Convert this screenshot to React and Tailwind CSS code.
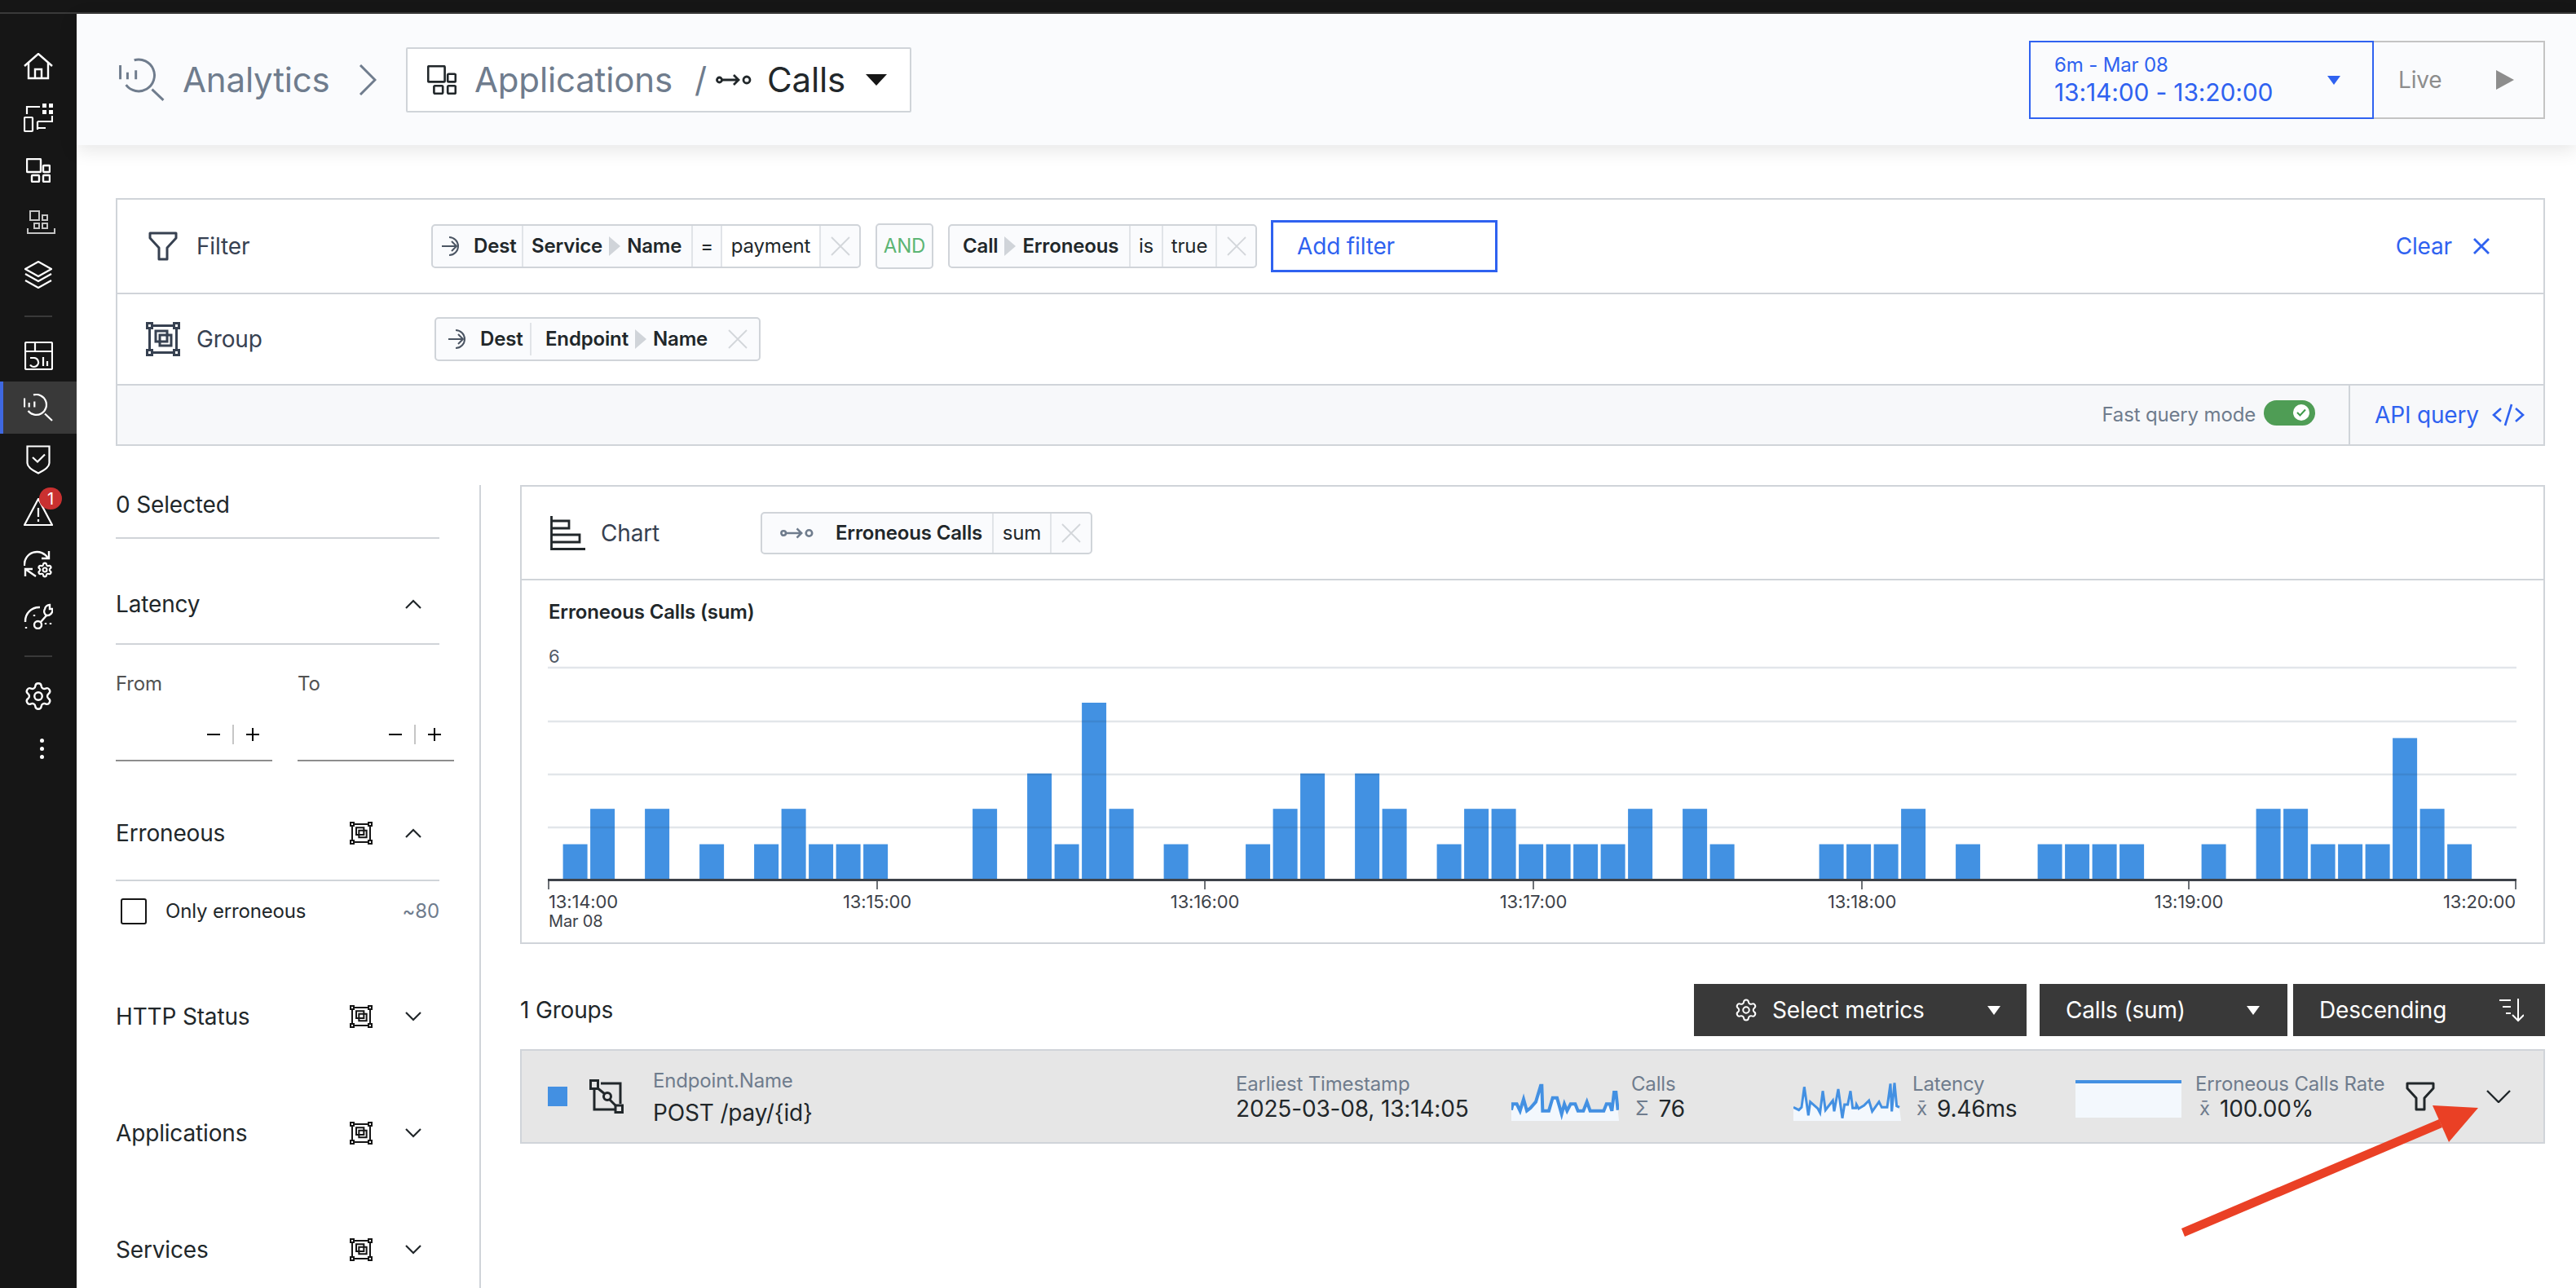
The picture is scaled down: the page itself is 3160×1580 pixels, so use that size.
import { Settings } from 'lucide-react'

const BARS = { 0: 1, 1: 2, 3: 2, 5: 1, 7: 1, 8: 2, 9: 1, 10: 1, 11: 1, 15: 2, 17: 3, 18: 1, 19: 5, 20: 2, 22: 1, 25: 1, 26: 2, 27: 3, 29: 3, 30: 2, 32: 1, 33: 2, 34: 2, 35: 1, 36: 1, 37: 1, 38: 1, 39: 2, 41: 2, 42: 1, 46: 1, 47: 1, 48: 1, 49: 2, 51: 1, 54: 1, 55: 1, 56: 1, 57: 1, 60: 1, 62: 2, 63: 2, 64: 1, 65: 1, 66: 1, 67: 4, 68: 2, 69: 1 }
const TICKS = [
  [673, '13:14:00', 'start'],
  [1076, '13:15:00', 'middle'],
  [1478, '13:16:00', 'middle'],
  [1881, '13:17:00', 'middle'],
  [2284, '13:18:00', 'middle'],
  [2685, '13:19:00', 'middle'],
  [3086, '13:20:00', 'end'],
]
const CALLS_LINE = '40,125 45,103 60,103 72,128 85,85 97,128 110,118 130,95 148,35 152,35 155,128 160,128 178,128 192,80 208,80 225,140 235,103 245,128 258,103 275,103 285,128 305,128 318,95 330,128 380,128 390,103 402,103 410,128 418,60 425,60 432,125'
const LATENCY_LINE = '40,115 60,125 70,115 80,40 95,145 102,95 130,120 138,135 148,55 158,125 185,90 190,130 205,48 220,155 228,105 240,105 250,55 258,118 270,118 272,105 280,120 300,108 318,90 330,130 355,95 365,115 385,115 397,28 402,130 412,25 420,110 430,115'

function Stroke({ w, h, vw, vh, sw = 2, className = '', children }) {
  return (
    <svg width={w} height={h} viewBox={`0 0 ${vw ?? w} ${vh ?? h}`} fill="none" stroke="currentColor" strokeWidth={sw} className={`shrink-0 ${className}`}>
      {children}
    </svg>
  )
}

function AnalyticsIcon({ w = 36, h = 34, sw = 2.2, className }) {
  return (
    <Stroke w={w} h={h} vw={36} vh={34} sw={sw} className={className}>
      <path d="M12 1.4A12.5 12.5 0 1 1 5.5 21" />
      <path d="M26 24.5L35 33" />
      <path d="M1 5.5V16.5M6.7 11V16.5M13.3 9.5V16.5" />
    </Stroke>
  )
}

function AppsIcon({ w = 30, h = 30, sw = 2.4, className }) {
  return (
    <Stroke w={w} h={h} vw={30} vh={30} sw={sw} className={className}>
      <rect x="1" y="1" width="17" height="16" rx="1" />
      <rect x="21" y="9" width="8" height="8" rx="1" />
      <rect x="7" y="21" width="9" height="8" rx="1" />
      <rect x="21" y="21" width="8" height="8" rx="1" />
    </Stroke>
  )
}

function GroupIcon({ size = 42, className }) {
  return (
    <Stroke w={size} h={size} vw={42} vh={42} sw={3} className={className}>
      <rect x="1.5" y="1.5" width="6" height="6" />
      <rect x="34.5" y="1.5" width="6" height="6" />
      <rect x="1.5" y="34.5" width="6" height="6" />
      <rect x="34.5" y="34.5" width="6" height="6" />
      <path d="M7 4.5H35M7 37.5H35M4.5 7V35M37.5 7V35" />
      <path d="M12 11H26V16H31V29H17V24H12Z" />
      <path d="M17 16H26V24H17Z" />
    </Stroke>
  )
}

function FilterIcon({ className }) {
  return (
    <Stroke w={36} h={36} sw={3} className={className}>
      <path d="M2 2H34V8L23 20V34H13V20L2 8Z" strokeLinejoin="round" />
    </Stroke>
  )
}

function CallsIcon({ w = 45, className }) {
  return (
    <Stroke w={w} h={16} vw={45} vh={16} sw={2.8} className={className}>
      <circle cx="4.5" cy="8" r="3" />
      <path d="M8 8H28M22 2L28 8L22 14" />
      <circle cx="38" cy="8" r="4" />
    </Stroke>
  )
}

function DestIcon() {
  return (
    <Stroke w={28} h={26} sw={2} className="text-[#4b5563]">
      <path d="M1 13H19M13 7L19 13L13 19" />
      <path d="M10 2A11 11 0 1 1 10 24" />
    </Stroke>
  )
}

function Pointer() {
  return (
    <svg width="14" height="24" viewBox="0 0 14 24" className="mx-[8px] shrink-0">
      <polygon points="0,0 14,12 0,24" fill="#d0d4d9" />
    </svg>
  )
}

function ChipClose({ size = 26 }) {
  return (
    <Stroke w={size} h={size} vw={26} vh={26} sw={1.8} className="text-[#d3d6da]">
      <path d="M2 2L24 24M24 2L2 24" />
    </Stroke>
  )
}

function Chevron({ up }) {
  return (
    <Stroke w={20} h={12} sw={2.2} className="text-[#21272a]">
      <path d={up ? 'M1 11L10 2L19 11' : 'M1 1L10 10L19 1'} />
    </Stroke>
  )
}

function Caret({ w = 16, h = 11, className }) {
  return (
    <svg width={w} height={h} viewBox="0 0 16 11" preserveAspectRatio="none" className={`shrink-0 ${className}`}>
      <polygon points="0,0 16,0 8,11" fill="currentColor" />
    </svg>
  )
}

function NavItem({ active, children, top = '' }) {
  return (
    <div className={`relative flex h-[64px] items-center justify-center ${top} ${active ? 'border-l-[4px] border-[#3f68e0] bg-[#393939] pr-[4px]' : ''}`}>
      {children}
    </div>
  )
}

function Sidebar() {
  return (
    <nav className="flex w-[94px] shrink-0 flex-col bg-[#161616] pt-[32px] text-white">
      <NavItem>
        <Stroke w={36} h={33} sw={2.4}>
          <path d="M1 16L18 1L35 16" />
          <path d="M6 12V31H30V12" />
          <path d="M14 31V20H22V31" />
        </Stroke>
      </NavItem>
      <NavItem>
        <Stroke w={36} h={36} sw={2.2}>
          <rect x="1" y="17" width="10" height="17" rx="1" />
          <path d="M4 13V4H20" />
          <path d="M35 15V22H17M17 22V32M17 30H27" />
          <g fill="white" stroke="none">
            <rect x="23" y="0" width="5" height="5" />
            <rect x="31" y="0" width="5" height="5" />
            <rect x="23" y="8" width="5" height="5" />
            <rect x="31" y="8" width="5" height="5" />
          </g>
        </Stroke>
      </NavItem>
      <NavItem>
        <AppsIcon />
      </NavItem>
      <NavItem>
        <Stroke w={35} h={30} sw={2} className="ml-[6px] text-[#c4c4c4]">
          <rect x="4" y="1" width="11" height="11" />
          <rect x="19" y="6" width="6" height="6" />
          <rect x="9" y="16" width="6" height="6" />
          <rect x="19" y="16" width="6" height="6" />
          <path d="M1 22V28H34V22" />
        </Stroke>
      </NavItem>
      <NavItem>
        <Stroke w={34} h={34} sw={2.2}>
          <path d="M17 1L33 10L17 19L1 10Z" />
          <path d="M1 16L17 25L33 16M1 24L17 33L33 24" />
        </Stroke>
      </NavItem>
      <div className="mx-[30px] mt-[18px] h-[2px] bg-[#393939]" />
      <NavItem top="mt-[15px]">
        <Stroke w={35} h={35} sw={2.2}>
          <rect x="1" y="1" width="33" height="33" rx="1.5" />
          <path d="M1 12H34M13 1V12" />
          <path d="M7 20H12A5.5 5.5 0 1 1 7 28.5" />
          <path d="M23 19V30M28 24V30" />
        </Stroke>
      </NavItem>
      <NavItem active>
        <AnalyticsIcon />
      </NavItem>
      <NavItem>
        <Stroke w={30} h={36} sw={2.2}>
          <path d="M1.5 1.5H28.5V22Q28.5 28 15 34.5Q1.5 28 1.5 22Z" />
          <path d="M8 15L14 20.5L23 11.5" />
        </Stroke>
      </NavItem>
      <NavItem>
        <Stroke w={36} h={34} sw={2.2}>
          <path d="M18 1L35 33H1Z" strokeLinejoin="round" />
          <path d="M18 12V23M18 26V29" />
        </Stroke>
        <span className="absolute top-[2px] left-[48px] flex h-[27px] w-[28px] items-center justify-center rounded-full bg-[#c93030] text-[20px] leading-none text-white">1</span>
      </NavItem>
      <NavItem>
        <Stroke w={36} h={34} sw={2.4}>
          <path d="M1 19A15.5 15.5 0 0 1 30 10" />
          <path d="M22 10H31V1" />
          <path d="M2 32V23H11M2 23L15 32" />
          <Settings x={16} y={14} width={20} height={20} strokeWidth={2.6} />
        </Stroke>
      </NavItem>
      <NavItem>
        <Stroke w={36} h={32} sw={2.4}>
          <path d="M2 23A17 17 0 0 1 20 5" />
          <path d="M13 14V16M3 29V31M27 24V26M33 24V26" />
          <circle cx="17.5" cy="26.5" r="4.5" />
          <path d="M21 23L28 15" />
          <path d="M26 7A6 6 0 0 1 32 2V7H35.5A7 7 0 0 1 28 15A6 6 0 0 1 26 7Z" />
        </Stroke>
      </NavItem>
      <div className="mx-[30px] mt-[16px] h-[2px] bg-[#393939]" />
      <NavItem top="mt-[16px]">
        <Settings size={38} strokeWidth={1.5} />
      </NavItem>
      <NavItem>
        <div className="ml-[8px] flex flex-col gap-[5px]">
          <span className="h-[5px] w-[5px] rounded-full bg-white" />
          <span className="h-[5px] w-[5px] rounded-full bg-white" />
          <span className="h-[5px] w-[5px] rounded-full bg-white" />
        </div>
      </NavItem>
    </nav>
  )
}

function Header() {
  return (
    <header className="relative z-10 flex h-[161px] shrink-0 items-center bg-[#fafbfd] pr-[38px] pl-[52px] shadow-[0_6px_22px_rgba(0,0,0,0.1)]">
      <AnalyticsIcon w={56} h={56} sw={1.9} className="text-[#6f7c8d]" />
      <span className="ml-[22px] w-[216px] text-[42px] text-[#6f7c8d]">Analytics</span>
      <Stroke w={22} h={38} sw={3} className="text-[#6f7c8d]">
        <path d="M2 1L20 19L2 37" />
      </Stroke>
      <div className="ml-[36px] flex h-[80px] w-[620px] items-center rounded-[2px] border-2 border-[#d0d4d9] bg-white pl-[24px]">
        <AppsIcon w={36} h={36} sw={2.2} className="text-[#21272a]" />
        <span className="ml-[22px] w-[270px] text-[42px] text-[#6f7c8d]">Applications</span>
        <span className="w-[26px] text-[42px] text-[#6f7c8d]">/</span>
        <CallsIcon className="text-[#21272a]" />
        <span className="ml-[18px] w-[121px] text-[42px] text-[#21272a]">Calls</span>
        <Caret w={26} h={14} className="text-[#161616]" />
      </div>
      <div className="ml-auto flex h-[96px]">
        <div className="flex w-[423px] items-center border-2 border-[#2f62f0] pr-[39px] pl-[29px] text-[#2f62f0]">
          <div>
            <div className="text-[24px] leading-[30px]">6m - Mar 08</div>
            <div className="text-[30px] leading-[36px]">13:14:00 - 13:20:00</div>
          </div>
          <Caret className="mt-[2px] ml-auto" />
        </div>
        <div className="flex w-[210px] items-center justify-between border-y-2 border-r-2 border-[#c4c4c4] pr-[36px] pl-[30px] text-[#8d8d8d]">
          <span className="text-[28px]">Live</span>
          <svg width="22" height="24" viewBox="0 0 22 24">
            <polygon points="0,0 22,12 0,24" fill="currentColor" />
          </svg>
        </div>
      </div>
    </header>
  )
}

function Cell({ w, white, last, className = '', children }) {
  return (
    <div className={`flex h-full shrink-0 items-center ${w} ${last ? '' : 'border-r-2 border-[#e1e4e8]'} ${white ? 'bg-white' : ''} ${className}`}>
      {children}
    </div>
  )
}

function QueryPanel() {
  return (
    <section className="mt-[65px] mr-[38px] ml-[48px] shrink-0 border-2 border-[#d0d4d9] text-[#21272a]">
      <div className="flex h-[114px] items-center">
        <div className="flex w-[385px] shrink-0 items-center gap-[23px] pl-[38px] text-[28px] text-[#374151]">
          <FilterIcon />
          Filter
        </div>
        <div className="flex h-[54px] w-[527px] shrink-0 items-center rounded-[5px] border-2 border-[#d0d4d9] bg-[#fafbfd] text-[24px]">
          <Cell w="w-[111px]" className="gap-[12px] pl-[10px] font-semibold">
            <DestIcon />
            Dest
          </Cell>
          <Cell w="w-[208px]" className="pl-[10px] font-semibold">
            Service
            <Pointer />
            Name
          </Cell>
          <Cell w="w-[36px]" className="justify-center">=</Cell>
          <Cell w="w-[121px]" white className="justify-center">payment</Cell>
          <Cell w="w-[47px]" last className="justify-center">
            <ChipClose />
          </Cell>
        </div>
        <div className="mx-[18px] flex h-[56px] w-[71px] shrink-0 items-center justify-center rounded-[5px] border-2 border-[#d0d4d9] bg-[#fafbfd] text-[24px] text-[#5cb574]">AND</div>
        <div className="flex h-[54px] w-[379px] shrink-0 items-center rounded-[5px] border-2 border-[#d0d4d9] bg-[#fafbfd] text-[24px]">
          <Cell w="w-[222px]" className="pl-[16px] font-semibold">
            Call
            <Pointer />
            Erroneous
          </Cell>
          <Cell w="w-[40px]" className="justify-center">is</Cell>
          <Cell w="w-[66px]" className="justify-center">true</Cell>
          <Cell w="w-[47px]" last className="justify-center">
            <ChipClose />
          </Cell>
        </div>
        <div className="ml-[17px] flex h-[64px] w-[278px] shrink-0 items-center border-[3px] border-[#2f62f0] pl-[29px] text-[28px] text-[#2f62f0]">Add filter</div>
        <div className="ml-auto flex items-center gap-[26px] pr-[66px] text-[28px] text-[#2f62f0]">
          Clear
          <Stroke w={20} h={20} sw={2.8}>
            <path d="M1 1L19 19M19 1L1 19" />
          </Stroke>
        </div>
      </div>
      <div className="flex h-[114px] items-center border-y-2 border-[#d0d4d9]">
        <div className="flex w-[389px] shrink-0 items-center gap-[20px] pl-[35px] text-[28px] text-[#374151]">
          <GroupIcon />
          Group
        </div>
        <div className="flex h-[54px] w-[400px] shrink-0 items-center rounded-[5px] border-2 border-[#d0d4d9] bg-[#fafbfd] text-[24px] font-semibold">
          <div className="flex h-[40px] w-[117px] shrink-0 items-center gap-[12px] border-r-2 border-[#e1e4e8] pl-[14px]">
            <DestIcon />
            Dest
          </div>
          <span className="ml-[17px]">Endpoint</span>
          <Pointer />
          Name
          <span className="mr-[13px] ml-auto">
            <ChipClose />
          </span>
        </div>
      </div>
      <div className="flex h-[72px] items-center justify-end bg-[#f7f8fa]">
        <span className="text-[24px] text-[#6f7c8d]">Fast query mode</span>
        <div className="mr-[41px] mb-[6px] ml-[10px] flex h-[31px] w-[63px] items-center justify-end rounded-full bg-[#4f9d55] pr-[7px]">
          <span className="flex h-[20px] w-[20px] items-center justify-center rounded-full bg-white">
            <Stroke w={12} h={10} sw={2} className="text-[#3f9a4a]">
              <path d="M1 5L4.5 8.5L11 1.5" />
            </Stroke>
          </span>
        </div>
        <div className="flex h-full w-[239px] items-center gap-[16px] border-l-2 border-[#d0d4d9] pl-[30px] text-[28px] text-[#2f62f0]">
          API query
          <Stroke w={40} h={28} sw={2.6}>
            <path d="M11 6L2 14L11 22M29 6L38 14L29 22M24 1L16 27" />
          </Stroke>
        </div>
      </div>
    </section>
  )
}

function FacetHeader({ label, open, grouped, className = 'h-[143px]' }) {
  return (
    <div className={`flex items-center pr-[22px] text-[28px] text-[#21272a] ${className}`}>
      <span className="flex-1">{label}</span>
      {grouped && <GroupIcon size={28} className="text-[#161616]" />}
      <span className="ml-[40px] flex">
        <Chevron up={open} />
      </span>
    </div>
  )
}

function RangeInput({ label }) {
  return (
    <div className="w-[192px] shrink-0">
      <div className="text-[24px] leading-[36px] text-[#525252]">{label}</div>
      <div className="mt-[13px] flex h-[64px] items-center justify-end border-b-2 border-[#8d8d8d] pr-[15px]">
        <Stroke w={18} h={18}>
          <path d="M1 9H17" />
        </Stroke>
        <span className="mx-[14px] h-[24px] w-[2px] bg-[#c6c6c6]" />
        <Stroke w={18} h={18}>
          <path d="M1 9H17M9 1V17" />
        </Stroke>
      </div>
    </div>
  )
}

function FacetColumn() {
  return (
    <aside className="w-[448px] shrink-0 border-r-2 border-[#d0d4d9] pr-[49px]">
      <div className="h-[66px] border-b-2 border-[#d0d4d9] pt-[6px] text-[28px] leading-[36px] text-[#21272a]">0 Selected</div>
      <FacetHeader label="Latency" open className="mt-[32px] h-[98px] border-b-2 border-[#d0d4d9]" />
      <div className="mt-[30px] flex gap-[31px]">
        <RangeInput label="From" />
        <RangeInput label="To" />
      </div>
      <FacetHeader label="Erroneous" open grouped className="mt-[31px] h-[114px]" />
      <div className="h-[2px] bg-[#d0d4d9]" />
      <div className="flex h-[74px] items-center pl-[6px] text-[24px] text-[#21272a]">
        <span className="h-[32px] w-[32px] rounded-[3px] border-2 border-[#161616]" />
        <span className="ml-[23px] flex-1">Only erroneous</span>
        <span className="text-[#6f7c8d]">~80</span>
      </div>
      <div className="mt-[20px]">
        <FacetHeader label="HTTP Status" grouped />
        <FacetHeader label="Applications" grouped />
        <FacetHeader label="Services" grouped />
      </div>
    </aside>
  )
}

function ChartPanel() {
  return (
    <section className="border-2 border-[#d0d4d9] text-[#21272a]">
      <div className="flex h-[115px] items-center border-b-2 border-[#d0d4d9]">
        <div className="flex w-[293px] shrink-0 items-center gap-[19px] pl-[35px] text-[28px] text-[#374151]">
          <Stroke w={43} h={42} sw={2.8} className="text-[#21272a]">
            <path d="M1.5 0V40.5H43" />
            <path d="M2 6H23V15H2M2 23H36V32H2" />
          </Stroke>
          Chart
        </div>
        <div className="flex h-[52px] w-[407px] items-center rounded-[5px] border-2 border-[#d0d4d9] bg-[#fafbfd] text-[24px]">
          <Cell w="w-[284px]" className="pl-[22px] font-semibold">
            <CallsIcon w={42} className="text-[#6f7c8d]" />
            <span className="ml-[26px]">Erroneous Calls</span>
          </Cell>
          <Cell w="w-[71px]" className="justify-center">sum</Cell>
          <Cell w="w-[48px]" last className="justify-center">
            <ChipClose />
          </Cell>
        </div>
      </div>
      <div className="px-[33px] pt-[23px] text-[24px] leading-[32px] font-semibold">Erroneous Calls (sum)</div>
      <svg width="2480" height="389" viewBox="640 767 2480 389" className="block">
        {Object.entries(BARS).map(([slot, n]) => (
          <rect key={slot} x={690.6 + slot * 33.5} y={1079 - n * 43.4} width={30} height={n * 43.4} fill="#2d85df" fillOpacity="0.9" />
        ))}
        {[819, 885, 950, 1015].map((y) => (
          <line key={y} x1="672" x2="3087" y1={y} y2={y} stroke="#1f3a5a" strokeOpacity="0.13" strokeWidth="2.5" />
        ))}
        <line x1="672" x2="3087" y1="1079.5" y2="1079.5" stroke="#3d4249" strokeWidth="3" />
        <text x="673" y="813" fontSize="22" fill="#525a66">6</text>
        {TICKS.map(([x, label, anchor]) => (
          <g key={label}>
            <line x1={x} x2={x} y1="1079" y2="1091" stroke="#3d4249" strokeWidth="1.5" />
            <text x={x} y="1114" fontSize="22" fill="#3d4249" textAnchor={anchor}>{label}</text>
          </g>
        ))}
        <text x="673" y="1137" fontSize="20" fill="#3d4249">Mar 08</text>
      </svg>
    </section>
  )
}

function Spark({ line, w = 132, sw = 12, vx = 40 }) {
  return (
    <svg width={w} height="55" viewBox={`${vx} 0 396 165`} className="mt-[5px] shrink-0">
      <polygon points={`${vx},165 ${line} ${vx + 396},165`} fill="#f3f8fd" />
      <polyline points={line} fill="none" stroke="#4390e2" strokeWidth={sw} />
    </svg>
  )
}

function Metric({ label, sign, value, className }) {
  return (
    <div className={`shrink-0 ${className}`}>
      <div className="text-[24px] leading-[30px] text-[#6f7c8d]">{label}</div>
      <div className="flex text-[28px] leading-[30px] text-[#21272a]">
        <span className="mr-[12px] ml-[5px] text-[24px] text-[#6f7c8d]">{sign}</span>
        {value}
      </div>
    </div>
  )
}

function Toolbar() {
  return (
    <div className="mt-[49px] flex items-center text-[28px]">
      <span className="flex-1 text-[#21272a]">1 Groups</span>
      <div className="flex h-[64px] text-white">
        <div className="flex w-[408px] items-center bg-[#393939] pr-[32px] pl-[49px]">
          <Settings size={30} strokeWidth={1.6} />
          <span className="ml-[17px] flex-1">Select metrics</span>
          <Caret w={16} h={11} />
        </div>
        <div className="ml-[16px] flex w-[304px] items-center bg-[#393939] pr-[34px] pl-[32px]">
          <span className="flex-1">Calls (sum)</span>
          <Caret w={16} h={11} />
        </div>
        <div className="ml-[7px] flex w-[309px] items-center bg-[#393939] pr-[26px] pl-[32px]">
          <span className="flex-1">Descending</span>
          <Stroke w={31} h={30} sw={2}>
            <path d="M1 3H15M5 11H15M9 19H15M24 1V28M17 21L24 28L31 21" />
          </Stroke>
        </div>
      </div>
    </div>
  )
}

function GroupRow() {
  return (
    <div className="mt-[16px] flex h-[116px] items-center border-2 border-[#d0d4d9] bg-[#e6e6e6] pl-[32px]">
      <span className="h-[24px] w-[24px] shrink-0 bg-[#4390e2]" />
      <Stroke w={42} h={42} sw={3} className="ml-[27px] text-[#21272a]">
        <rect x="1.5" y="1.5" width="9" height="10" />
        <rect x="32" y="32" width="8.5" height="8.5" />
        <circle cx="22" cy="21" r="4.5" />
        <path d="M9 10L19 18M25 25L33 33" />
        <path d="M14 5H38V30M6 11V37H31" />
      </Stroke>
      <div className="mt-[4px] ml-[36px] w-[715px] shrink-0">
        <div className="text-[24px] leading-[36px] text-[#6f7c8d]">Endpoint.Name</div>
        <div className="text-[28px] leading-[42px] text-[#21272a]">POST /pay/{'{id}'}</div>
      </div>
      <div className="w-[338px] shrink-0">
        <div className="text-[24px] leading-[30px] text-[#6f7c8d]">Earliest Timestamp</div>
        <div className="text-[28px] leading-[30px] text-[#21272a]">2025-03-08, 13:14:05</div>
      </div>
      <Spark line={CALLS_LINE} />
      <Metric label="Calls" sign="Σ" value="76" className="ml-[15px] w-[199px]" />
      <Spark line={LATENCY_LINE} sw={9} />
      <Metric label="Latency" sign="x̄" value="9.46ms" className="ml-[14px] w-[200px]" />
      <svg width="130" height="46" viewBox="0 0 130 46" className="mt-[5px] shrink-0">
        <rect y="2" width="130" height="44" fill="#f3f8fd" />
        <rect width="130" height="4" fill="#4390e2" />
      </svg>
      <Metric label="Erroneous Calls Rate" sign="x̄" value="100.00%" className="ml-[17px] w-[258px]" />
      <FilterIcon className="text-[#21272a]" />
      <Stroke w={30} h={16} sw={2.4} className="ml-[63px] text-[#21272a]">
        <path d="M1 1L15 15L29 1" />
      </Stroke>
    </div>
  )
}

function Annotation() {
  return (
    <svg className="pointer-events-none absolute inset-0 z-20" width="3160" height="1580" viewBox="0 0 3160 1580">
      <polygon points="2676,1507 2680,1517 2996,1383 2992,1373" fill="#ea4025" />
      <polygon points="2984,1356 3040,1359 3004,1401" fill="#ea4025" />
    </svg>
  )
}

export default function App() {
  return (
    <div className="relative flex h-screen w-screen flex-col overflow-hidden bg-white font-[family-name:Inter,sans-serif] tracking-[-0.01em]">
      <div className="h-[17px] shrink-0 border-b-2 border-[#3a3a3a] bg-[#161616]" />
      <div className="flex min-h-0 flex-1">
        <Sidebar />
        <main className="flex min-w-0 flex-1 flex-col">
          <Header />
          <QueryPanel />
          <div className="mt-[48px] mr-[38px] ml-[48px] flex min-h-0 flex-1 gap-[48px]">
            <FacetColumn />
            <div className="min-w-0 flex-1">
              <ChartPanel />
              <Toolbar />
              <GroupRow />
            </div>
          </div>
        </main>
      </div>
      <Annotation />
    </div>
  )
}
